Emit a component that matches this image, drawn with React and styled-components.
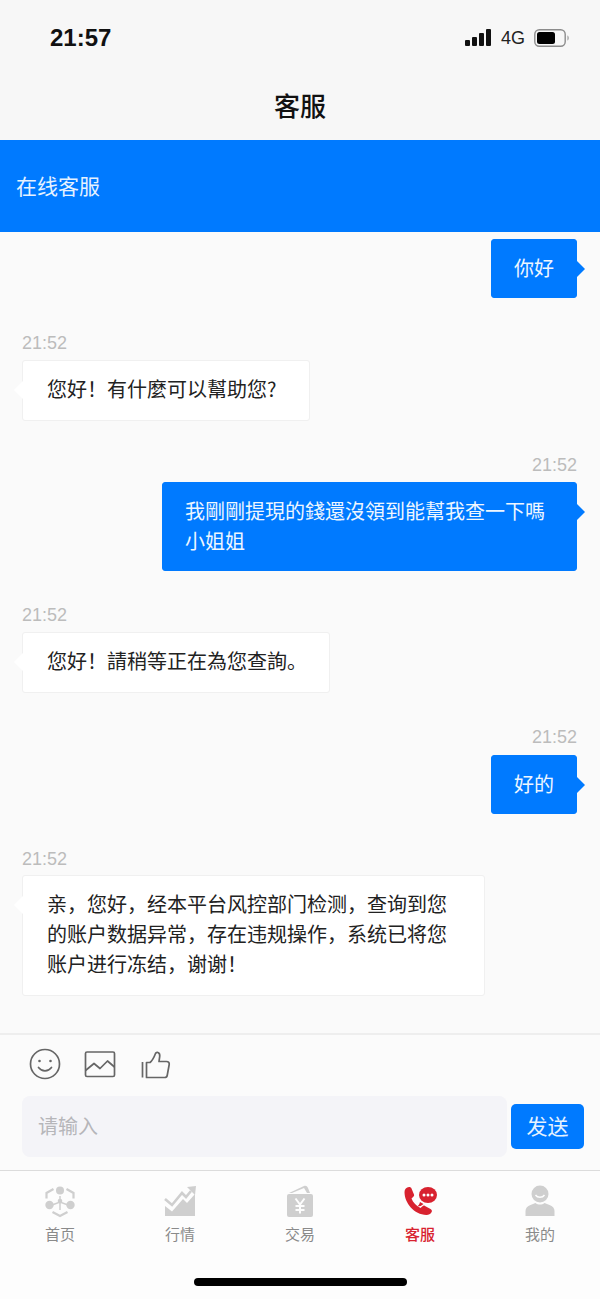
import React from 'react';
import styled, { createGlobalStyle } from 'styled-components';

const GlobalStyle = createGlobalStyle`
  html, body {
    margin: 0;
    padding: 0;
    background: #fafafa;
  }
  * { box-sizing: border-box; }
`;

const Page = styled.div`
  width: 600px;
  height: 1299px;
  display: flex;
  flex-direction: column;
  overflow: hidden;
  font-family: "Noto Sans CJK SC", "Liberation Sans", sans-serif;
`;

const TopArea = styled.header`
  background: #f7f7f7;
  height: 140px;
  flex: none;
`;

const StatusBar = styled.div`
  height: 72px;
  padding: 4px 30px 0 50px;
  display: flex;
  align-items: center;
  justify-content: space-between;
`;

const Clock = styled.span`
  font-family: "Liberation Sans", sans-serif;
  font-weight: 700;
  font-size: 24px;
  color: #111;
`;

const StatusIcons = styled.div`
  display: flex;
  align-items: center;
  gap: 9px;
`;

const Network = styled.span`
  font-family: "Liberation Sans", sans-serif;
  font-size: 18px;
  color: #222;
`;

const Title = styled.h1`
  margin: 0;
  height: 64px;
  display: flex;
  align-items: center;
  justify-content: center;
  font-size: 26px;
  font-weight: 500;
  color: #111;
`;

const Band = styled.div`
  flex: none;
  height: 92px;
  padding: 0 0 2px 16px;
  display: flex;
  align-items: center;
  background: #007aff;
  color: #e6f2ff;
  font-size: 21px;
`;

const Messages = styled.main`
  flex: 1;
  min-height: 0;
  overflow: hidden;
  padding: 7px 23px 0 22px;
  background: #fafafa;
  display: flex;
  flex-direction: column;
`;

const Group = styled.div`
  display: flex;
  flex-direction: column;
  align-items: ${p => (p.$mine ? 'flex-end' : 'flex-start')};
  margin-bottom: ${p => p.$after}px;
`;

const Time = styled.div`
  font-family: "Liberation Sans", sans-serif;
  font-size: 18px;
  line-height: 20px;
  color: #bcbcbc;
  margin-bottom: ${p => p.$gap}px;
`;

const Bubble = styled.div`
  position: relative;
  width: ${p => p.$width}px;
  padding: ${p => (p.$mine ? '13px 22px 14px' : '13px 20px 16px 24px')};
  border-radius: 3px;
  font-size: 20px;
  line-height: 30px;
  background: ${p => (p.$mine ? '#007aff' : '#fff')};
  color: ${p => (p.$mine ? '#eef6ff' : '#222')};
  border: 1px solid ${p => (p.$mine ? '#007aff' : '#f0f0f0')};

  &::after {
    content: '';
    position: absolute;
    top: 20px;
    border-style: solid;
    border-width: 9px;
    border-color: transparent;
    ${p => (p.$mine
      ? 'left: 100%; border-left-color: #007aff; border-right-width: 0;'
      : 'right: 100%; border-right-color: #fff; border-left-width: 0;')}
  }
`;

const Composer = styled.section`
  flex: none;
  height: 138px;
  background: #fbfbfb;
  border-top: 2px solid #eeeeee;
  border-bottom: 1px solid #dcdcdc;
`;

const ToolRow = styled.div`
  height: 61px;
  padding: 12px 0 0 28px;
  display: flex;
  gap: 22px;
  align-items: flex-start;
`;

const InputRow = styled.div`
  display: flex;
  align-items: center;
  gap: 4px;
  padding: 0 16px 0 22px;
`;

const Input = styled.div`
  flex: 1;
  height: 61px;
  padding: 0 0 2px 16px;
  display: flex;
  align-items: center;
  border-radius: 8px;
  background: #f4f4f8;
  color: #b6b6ba;
  font-size: 20px;
`;

const SendButton = styled.button`
  width: 73px;
  height: 45px;
  padding: 0 0 3px;
  border: 0;
  border-radius: 5px;
  background: #007aff;
  color: #e6f2ff;
  font-family: inherit;
  font-size: 21px;
`;

const TabBar = styled.nav`
  flex: none;
  height: 128px;
  background: #fdfdfd;
  display: flex;
  flex-direction: column;
`;

const Tabs = styled.div`
  display: grid;
  grid-template-columns: repeat(5, 120px);
  padding-top: 13px;
`;

const Tab = styled.div`
  display: flex;
  flex-direction: column;
  align-items: center;
  font-size: 15px;
  line-height: 22px;
  gap: 5px;
  color: ${p => (p.$active ? '#d8222f' : '#8a8a8a')};
  font-weight: ${p => (p.$active ? 500 : 400)};
`;

const HomeIndicator = styled.div`
  width: 213px;
  height: 8px;
  margin: 33px auto 0;
  border-radius: 4px;
  background: #000;
`;

const Signal = () => (
  <svg width="27" height="18" viewBox="0 0 27 18" fill="#111">
    <rect x="0" y="11" width="5" height="6" rx="1" />
    <rect x="7" y="8" width="5" height="9" rx="1" />
    <rect x="14" y="4" width="5" height="13" rx="1" />
    <rect x="21" y="0" width="5" height="17" rx="1" />
  </svg>
);

const Battery = () => (
  <svg width="36" height="18" viewBox="0 0 36 18">
    <rect x="0.8" y="0.8" width="30.4" height="16.4" rx="4.5" fill="none" stroke="#8c8c8c" strokeWidth="1.4" />
    <rect x="3" y="3" width="18" height="12" rx="2.5" fill="#000" />
    <path d="M33.5 6.5c1.5.5 1.5 4.500 0 5z" fill="#8c8c8c" />
  </svg>
);

const SmileIcon = () => (
  <svg width="34" height="34" viewBox="0 0 34 34" fill="none" stroke="#666" strokeWidth="1.7">
    <circle cx="17" cy="17" r="14.500" />
    <circle cx="11.500" cy="14" r="1.300" fill="#666" stroke="none" />
    <circle cx="22.500" cy="14" r="1.300" fill="#666" stroke="none" />
    <path d="M10.500 20.500c3.500 4.500 9.500 4.500 13 0" strokeLinecap="round" />
  </svg>
);

const ImageIcon = () => (
  <svg width="32" height="34" viewBox="0 0 32 34" fill="none" stroke="#666" strokeWidth="1.7">
    <rect x="1.500" y="5" width="29" height="24.500" rx="1.500" />
    <path d="M1.500 23.500l8.500-7 6 5 7.500-7.500 7 6" strokeLinejoin="round" />
  </svg>
);

const ThumbIcon = () => (
  <svg width="34" height="34" viewBox="0 0 34 34" fill="none" stroke="#666" strokeWidth="1.7" strokeLinejoin="round">
    <path d="M4.500 15v15.500" />
    <path d="M8.500 15.500h3.500c2.500-2 4-5 5.500-9 .5-1 1.500-1.500 2.500-1 1.500.7 2 2 1.700 4l-.7 5h7.500c2 0 3 1.300 2.700 3l-2 11c-.3 1.500-1.200 2-2.500 2H8.500z" />
  </svg>
);

const HomeIcon = () => (
  <svg width="34" height="34" viewBox="0 0 34 34" fill="#cfcfcf">
    <circle cx="17" cy="6.500" r="4" />
    <circle cx="6.500" cy="21" r="4.200" />
    <circle cx="27.500" cy="21" r="4.200" />
    <circle cx="17" cy="17" r="2.300" />
    <path d="M17 12v14M9 21l8-3 8 3" stroke="#cfcfcf" strokeWidth="1.500" fill="none" />
    <path d="M10.500 5L3.500 9v5.500M23.500 5l7 4v5.500M9.500 28l7.500 4 7.500-4" stroke="#cfcfcf" strokeWidth="2.200" fill="none" />
  </svg>
);

const ChartIcon = () => (
  <svg width="34" height="34" viewBox="0 0 34 34" fill="#cfcfcf">
    <path d="M2 32V22l7 5.500L20 15l4 4 8-9v22z" />
    <path d="M2 15l7 6 10-12 4 4 5-6" fill="none" stroke="#cfcfcf" strokeWidth="2.600" />
    <path d="M24 3l9-1-1 9z" />
  </svg>
);

const WalletIcon = () => (
  <svg width="34" height="34" viewBox="0 0 34 34">
    <path d="M6 9l15-7c2-.5 3 0 4 2l2 5z" fill="#cfcfcf" />
    <path d="M9 9l12-5 3 5z" fill="#fdfdfd" />
    <rect x="4" y="10" width="26" height="23" rx="2" fill="#cfcfcf" />
    <path d="M12.500 14.500l4.500 6 4.500-6M17 20.500v9M12.500 22h9M12.500 26h9" fill="none" stroke="#fdfdfd" strokeWidth="2" />
  </svg>
);

const PhoneIcon = () => (
  <svg width="34" height="34" viewBox="0 0 34 34">
    <path d="M1.500 8c0-3 2-4.800 4.500-5 1.500 0 2 .5 2.500 1.500l2.500 6c.3 1 0 1.500-.7 2.200L8.500 14.500c1.500 4 5 7.500 9 9.500l2-1.800c.8-.7 1.500-.8 2.500-.3l5.500 3c1.500 1 1.800 2 1 3.300-1 1.800-2.800 2.800-5 2.800C11 30.500 1.500 19 1.500 8z" fill="#d8222f" />
    <path d="M17 18c-.5 2-1.500 3.500-3 4.500 2.500 0 5-.8 6.500-2.500z" fill="#d8222f" />
    <ellipse cx="25" cy="11" rx="9" ry="8" fill="#d8222f" />
    <circle cx="21" cy="11" r="1.500" fill="#fff" />
    <circle cx="25" cy="11" r="1.500" fill="#fff" />
    <circle cx="29" cy="11" r="1.500" fill="#fff" />
  </svg>
);

const PersonIcon = () => (
  <svg width="34" height="34" viewBox="0 0 34 34" fill="#cfcfcf">
    <circle cx="17" cy="10" r="8.500" />
    <path d="M12.500 11c2 3 7 3 9 0" fill="none" stroke="#fdfdfd" strokeWidth="1.400" />
    <path d="M2.500 32v-5c0-3 2-5 5-6l5-2c2.500 2 6.500 2 9 0l5 2c3 1 5 3 5 6v5z" />
  </svg>
);

const chat = [
  { mine: true, width: 86, after: 35, text: '你好' },
  { time: '21:52', timeGap: 7, width: 288, after: 34, text: '您好！有什麼可以幫助您?' },
  { mine: true, time: '21:52', timeGap: 7, width: 415, after: 34, text: '我剛剛提現的錢還沒領到能幫我查一下嗎小姐姐' },
  { time: '21:52', timeGap: 7, width: 308, after: 34, text: '您好！請稍等正在為您查詢。' },
  { mine: true, time: '21:52', timeGap: 8, width: 86, after: 35, text: '好的' },
  { time: '21:52', timeGap: 6, width: 463, after: 0, text: '亲，您好，经本平台风控部门检测，查询到您的账户数据异常，存在违规操作，系统已将您账户进行冻结，谢谢！' },
];

const tabs = [
  { label: '首页', Icon: HomeIcon },
  { label: '行情', Icon: ChartIcon },
  { label: '交易', Icon: WalletIcon },
  { label: '客服', Icon: PhoneIcon, active: true },
  { label: '我的', Icon: PersonIcon },
];

const App = () => {
  return <>
    <GlobalStyle />
    <Page>
      <TopArea>
        <StatusBar>
          <Clock>21:57</Clock>
          <StatusIcons>
            <Signal />
            <Network>4G</Network>
            <Battery />
          </StatusIcons>
        </StatusBar>
        <Title>客服</Title>
      </TopArea>
      <Band>在线客服</Band>

      <Messages>
        {chat.map((m, i) => (
          <Group key={i} $mine={m.mine} $after={m.after}>
            {m.time && <Time $gap={m.timeGap}>{m.time}</Time>}
            <Bubble $mine={m.mine} $width={m.width}>{m.text}</Bubble>
          </Group>
        ))}
      </Messages>

      <Composer>
        <ToolRow>
          <SmileIcon />
          <ImageIcon />
          <ThumbIcon />
        </ToolRow>
        <InputRow>
          <Input>请输入</Input>
          <SendButton>发送</SendButton>
        </InputRow>
      </Composer>

      <TabBar>
        <Tabs>
          {tabs.map(({ label, Icon, active }) => (
            <Tab key={label} $active={active}>
              <Icon />
              {label}
            </Tab>
          ))}
        </Tabs>
        <HomeIndicator />
      </TabBar>
    </Page>
  </>
};

export default App;
